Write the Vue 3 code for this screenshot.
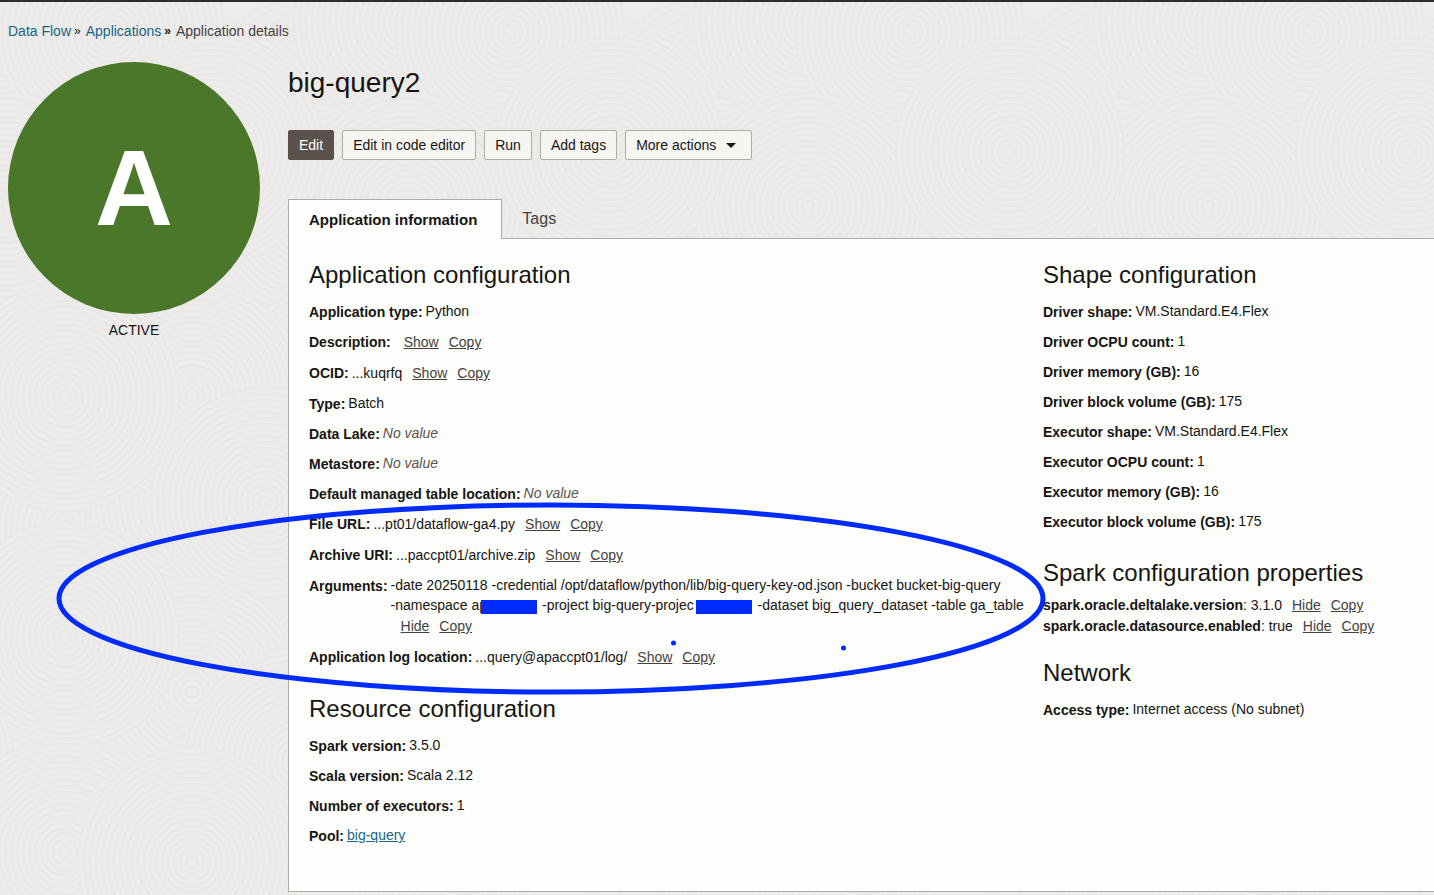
<script setup>
const discs = [
  [150, 285], [350, 300], [310, 110], [8, 20], [210, 130], [110, 30], [310, 210], [8, 205], [210, 150],
  [330, 400], [65, 525], [192, 500], [330, 640], [192, 393], [65, 395], [265, 500], [192, 690],
  [65, 635], [300, 760], [65, 850], [192, 860],
]
const swirls = discs.flatMap(([x, y]) => [[x, y], [x - 400, y], [x + 400, y]])
const rings = Array.from({ length: 19 }, (_, i) => 114 - i * 6)

const appRows = [
  { label: 'Application type', value: 'Python' },
  { label: 'Description', value: '', links: ['Show', 'Copy'] },
  { label: 'OCID', value: '...kuqrfq', links: ['Show', 'Copy'] },
  { label: 'Type', value: 'Batch' },
  { label: 'Data Lake', empty: true },
  { label: 'Metastore', empty: true },
  { label: 'Default managed table location', empty: true },
  { label: 'File URL', value: '...pt01/dataflow-ga4.py', links: ['Show', 'Copy'] },
  { label: 'Archive URI', value: '...paccpt01/archive.zip', links: ['Show', 'Copy'] },
  { label: 'Arguments', args: true },
  { label: 'Application log location', value: '...query@apaccpt01/log/', links: ['Show', 'Copy'] },
]
const resourceRows = [
  { label: 'Spark version', value: '3.5.0' },
  { label: 'Scala version', value: 'Scala 2.12' },
  { label: 'Number of executors', value: '1' },
]
const shapeRows = [
  { label: 'Driver shape', value: 'VM.Standard.E4.Flex' },
  { label: 'Driver OCPU count', value: '1' },
  { label: 'Driver memory (GB)', value: '16' },
  { label: 'Driver block volume (GB)', value: '175' },
  { label: 'Executor shape', value: 'VM.Standard.E4.Flex' },
  { label: 'Executor OCPU count', value: '1' },
  { label: 'Executor memory (GB)', value: '16' },
  { label: 'Executor block volume (GB)', value: '175' },
]
const sparkProps = [
  { key: 'spark.oracle.deltalake.version', value: '3.1.0' },
  { key: 'spark.oracle.datasource.enabled', value: 'true' },
]
</script>

<template>
  <div class="page">
    <svg class="texture" width="100%" height="100%" aria-hidden="true">
      <defs>
        <pattern id="swirl" width="400" height="900" patternUnits="userSpaceOnUse">
          <rect width="400" height="900" fill="#edecea" />
          <g v-for="(s, i) in swirls" :key="i" fill="#edecea" stroke="#e9e8e6" stroke-width="2">
            <circle v-for="r in rings" :key="r" :cx="s[0]" :cy="s[1]" :r="r" />
          </g>
        </pattern>
      </defs>
      <rect width="100%" height="100%" fill="url(#swirl)" />
    </svg>

    <nav class="crumbs" aria-label="Breadcrumb">
      <a href="#">Data Flow</a><span class="sep">»</span>
      <a href="#">Applications</a><span class="sep strong">»</span>
      <span>Application details</span>
    </nav>

    <div class="layout">
      <aside class="status">
        <div class="avatar">A</div>
        <p>ACTIVE</p>
      </aside>

      <main class="main">
        <h1>big-query2</h1>
        <div class="actions">
          <button class="btn primary">Edit</button>
          <button class="btn">Edit in code editor</button>
          <button class="btn">Run</button>
          <button class="btn">Add tags</button>
          <button class="btn menu">More actions
            <svg width="10" height="5" viewBox="0 0 10 5" aria-hidden="true"><path d="M0 0h10L5 5z" fill="#161513" /></svg>
          </button>
        </div>

        <div class="tabs" role="tablist">
          <button class="tab active" role="tab" aria-selected="true">Application information</button>
          <button class="tab" role="tab" aria-selected="false">Tags</button>
        </div>

        <div class="panel">
          <div class="col">
            <section>
              <h2>Application configuration</h2>
              <dl>
                <div v-for="row in appRows" :key="row.label" class="row" :class="{ linked: row.links, args: row.args }">
                  <dt>{{ row.label }}:</dt>
                  <dd v-if="row.empty" class="none">No value</dd>
                  <dd v-else-if="row.args">
                    <div>-date 20250118 -credential /opt/dataflow/python/lib/big-query-key-od.json -bucket bucket-big-query</div>
                    <div>-namespace ap<span class="redact"></span> -project big-query-projec<span class="redact second"></span> -dataset big_query_dataset -table ga_table</div>
                    <div class="arg-links"><a href="#" class="act">Hide</a><a href="#" class="act">Copy</a></div>
                  </dd>
                  <dd v-else>{{ row.value }}<a v-for="l in row.links" :key="l" href="#" class="act">{{ l }}</a></dd>
                </div>
              </dl>
            </section>
            <section>
              <h2>Resource configuration</h2>
              <dl>
                <div v-for="row in resourceRows" :key="row.label" class="row">
                  <dt>{{ row.label }}:</dt><dd>{{ row.value }}</dd>
                </div>
                <div class="row"><dt>Pool:</dt><dd><a href="#" class="pool">big-query</a></dd></div>
              </dl>
            </section>
          </div>

          <div class="col">
            <section>
              <h2>Shape configuration</h2>
              <dl>
                <div v-for="row in shapeRows" :key="row.label" class="row">
                  <dt>{{ row.label }}:</dt><dd>{{ row.value }}</dd>
                </div>
              </dl>
            </section>
            <section class="props">
              <h2>Spark configuration properties</h2>
              <p v-for="p in sparkProps" :key="p.key"><b>{{ p.key }}</b>: {{ p.value }}<a href="#" class="act">Hide</a><a href="#" class="act">Copy</a></p>
            </section>
            <section class="network">
              <h2>Network</h2>
              <dl>
                <div class="row"><dt>Access type:</dt><dd>Internet access (No subnet)</dd></div>
              </dl>
            </section>
          </div>
        </div>
      </main>
    </div>

    <svg class="markup" width="1060" height="210" viewBox="0 0 1060 210" aria-hidden="true">
      <ellipse cx="551" cy="108.5" rx="492" ry="93.5" fill="none" stroke="#002bff" stroke-width="5" />
      <circle cx="673.5" cy="153" r="2.5" fill="#002bff" />
      <circle cx="843.5" cy="158" r="2.5" fill="#002bff" />
    </svg>
  </div>
</template>

<style>
body { background: #edecea; }
</style>

<style scoped>
.page {
  position: relative;
  z-index: 0;
  box-sizing: border-box;
  min-height: 100vh;
  overflow: hidden;
  border-top: 2px solid #312d2a;
  color: #161513;
  font: 14px/20px "Liberation Sans", Arial, sans-serif;
}
.texture { position: absolute; inset: 0; z-index: -1; }
a { color: #1a6489; text-decoration: none; }
.crumbs { display: flex; padding: 19px 8px 0; color: #45413e; }
.sep { margin: 0 5px 0 3px; font-size: 12px; color: #161513; }
.sep.strong { font-weight: bold; }
.layout { display: flex; gap: 28px; padding: 21px 0 3px 8px; }
.status { flex: none; width: 252px; text-align: center; }
.status p { margin: 6px 0 0; }
.avatar {
  height: 252px;
  border-radius: 50%;
  background: #4a7729;
  color: #fff;
  font-size: 108px;
  line-height: 252px;
  font-weight: bold;
}
.main { flex: 1; min-width: 0; }
h1 { margin: 0; padding-top: 4px; font-size: 28px; line-height: 34px; font-weight: normal; }
.actions { display: flex; gap: 8px; margin-top: 30px; }
.btn {
  height: 30px;
  padding: 0 10px;
  border: 1px solid #b0aca5;
  border-radius: 2px;
  background: #f7f5f2;
  color: #161513;
  font: inherit;
}
.btn.primary { border-color: #5b524d; background: #5b524d; color: #fff; }
.btn.menu { display: flex; align-items: center; gap: 10px; padding-right: 15px; }
.tabs { display: flex; margin-top: 39px; }
.tab {
  height: 40px;
  padding: 0 20px;
  border: 0;
  background: none;
  color: #45413e;
  font: 16px/20px "Liberation Sans", Arial, sans-serif;
}
.tab.active {
  position: relative;
  z-index: 1;
  padding-right: 24px;
  border: 1px solid #b0aca5;
  border-bottom: 0;
  background: #fdfdfb;
  color: #161513;
  font-size: 15px;
  font-weight: bold;
}
.panel {
  display: grid;
  grid-template-columns: 734fr 391fr;
  margin-top: -1px;
  padding: 20px 0 36px 20px;
  border: 1px solid #b0aca5;
  border-right: 0;
  background: #fdfdfb;
}
h2 { margin: 0 0 10px; font-size: 24px; line-height: 32px; font-weight: normal; }
dl { margin: 0; }
section + section { padding-top: 16px; }
.row { display: flex; gap: 3px; margin-bottom: 8px; white-space: nowrap; }
dt { line-height: 22px; font-weight: bold; }
dd { margin: 0; }
.linked { margin-bottom: 9px; }
.linked dd { line-height: 22px; }
.args { margin-bottom: 9px; }
.arg-links { line-height: 22px; }
.none { color: #5b524d; font-style: italic; }
.act { margin-left: 10px; color: #45413e; text-decoration: underline; }
.pool { text-decoration: underline; }
.redact {
  position: relative;
  display: inline-block;
  width: 56px;
  height: 14px;
  margin: 0 1px 0 -6px;
  background: #002bff;
  vertical-align: -4px;
}
.redact.second { margin: 0 2px; }
.props h2 { margin-bottom: 6px; }
.props p { margin: 0; line-height: 21px; white-space: nowrap; }
section.network { padding-top: 20px; }
.markup { position: absolute; left: 0; top: 488px; pointer-events: none; }
</style>
